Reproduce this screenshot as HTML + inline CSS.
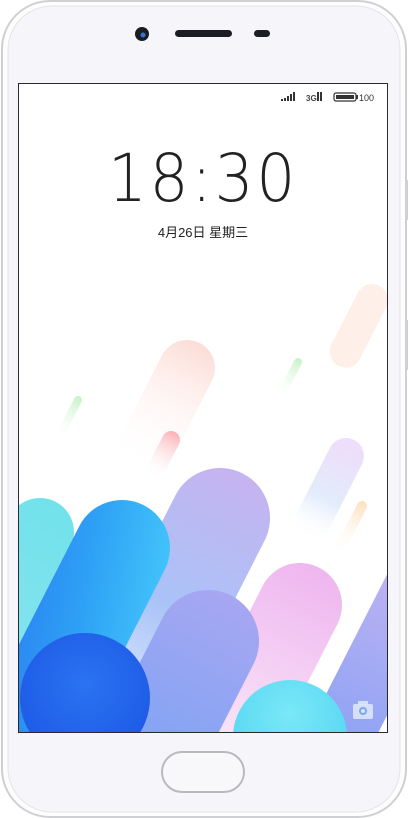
<!DOCTYPE html>
<html><head><meta charset="utf-8"><style>
html,body{margin:0;padding:0;background:#fff;width:408px;height:818px;overflow:hidden}
</style></head><body>
<svg width="408" height="818" viewBox="0 0 408 818" xmlns="http://www.w3.org/2000/svg">
<defs>
<clipPath id="scr"><rect x="19" y="84" width="368" height="648"/></clipPath>
<linearGradient id="gb" x1="1" y1="0" x2="0" y2="1"><stop offset="0" stop-color="#45c8fb"/><stop offset="0.5" stop-color="#2ea0f5"/><stop offset="1" stop-color="#2a7cf0"/></linearGradient>
<linearGradient id="gp" x1="0" y1="0" x2="0" y2="1"><stop offset="0" stop-color="#c6b3f0"/><stop offset="0.5" stop-color="#a9c3f7"/><stop offset="1" stop-color="#eaf2ff"/></linearGradient>
<linearGradient id="gk" x1="0" y1="0" x2="0" y2="1"><stop offset="0" stop-color="#efb6ef"/><stop offset="1" stop-color="#fbf3fb"/></linearGradient>
<linearGradient id="gl" x1="0" y1="0" x2="0" y2="1"><stop offset="0" stop-color="#c4b4f3"/><stop offset="1" stop-color="#7d9ef4"/></linearGradient>
<linearGradient id="gm" x1="0" y1="0" x2="0" y2="1"><stop offset="0" stop-color="#a7a6f2"/><stop offset="1" stop-color="#78a4f4"/></linearGradient>
<linearGradient id="gf" x1="0" y1="0" x2="0" y2="1"><stop offset="0" stop-color="#fcdcd6"/><stop offset="1" stop-color="#ffffff" stop-opacity="0"/></linearGradient>
<linearGradient id="gr" x1="0" y1="0" x2="0" y2="1"><stop offset="0" stop-color="#fbb0b6"/><stop offset="1" stop-color="#ffffff" stop-opacity="0"/></linearGradient>
<linearGradient id="gg" x1="0" y1="0" x2="0" y2="1"><stop offset="0" stop-color="#c6f2c6"/><stop offset="1" stop-color="#ffffff" stop-opacity="0"/></linearGradient>
<linearGradient id="go" x1="0" y1="0" x2="0" y2="1"><stop offset="0" stop-color="#fbe0bc"/><stop offset="1" stop-color="#ffffff" stop-opacity="0"/></linearGradient>
<linearGradient id="gv" x1="0" y1="0" x2="0" y2="1"><stop offset="0" stop-color="#efdcfb"/><stop offset="0.6" stop-color="#e2ecfb"/><stop offset="1" stop-color="#ffffff" stop-opacity="0"/></linearGradient>
<linearGradient id="gcl" x1="0" y1="0" x2="0" y2="1"><stop offset="0" stop-color="#72e2ea"/><stop offset="1" stop-color="#8ee4f0"/></linearGradient>
<radialGradient id="gd" cx="0.5" cy="0.4" r="0.6"><stop offset="0" stop-color="#2a73f2"/><stop offset="1" stop-color="#1e5ae6"/></radialGradient>
<radialGradient id="gcy" cx="0.5" cy="0.3" r="0.7"><stop offset="0" stop-color="#7ae8f7"/><stop offset="1" stop-color="#52d4f2"/></radialGradient>
</defs>
<rect x="2" y="1" width="404" height="816" rx="48" fill="#fdfdfe" stroke="#cfd0d4" stroke-width="2"/>
<rect x="8" y="6" width="392" height="806" rx="44" fill="#f6f6fa" stroke="#e4e4e8" stroke-width="1"/>
<rect x="405" y="180" width="3" height="40" fill="#d0d0d4"/>
<rect x="405" y="320" width="3" height="50" fill="#d0d0d4"/>
<circle cx="142" cy="34" r="7" fill="#1b1b22"/><circle cx="143" cy="35" r="2.5" fill="#3a6fd8"/>
<rect x="175" y="30" width="57" height="7" rx="3.5" fill="#1d1d24"/>
<rect x="254" y="30" width="16" height="7" rx="3.5" fill="#1d1d24"/>
<rect x="18" y="83" width="370" height="650" fill="#2a2a2e"/>
<g clip-path="url(#scr)">
<rect x="19" y="84" width="368" height="648" fill="#fff"/>
<g transform="translate(187,368) rotate(27)"><rect x="-28" y="-28" width="56" height="140" rx="28" fill="url(#gf)"/></g>
<g transform="translate(372,300) rotate(27)"><rect x="-16" y="-16" width="32" height="90" rx="16" fill="#fde6d8" opacity="0.6"/></g>
<g transform="translate(298,362) rotate(27)"><rect x="-4" y="-4" width="8" height="45" rx="4" fill="url(#gg)"/></g>
<g transform="translate(78,400) rotate(27)"><rect x="-4" y="-4" width="8" height="50" rx="4" fill="url(#gg)"/></g>
<g transform="translate(171,440) rotate(27)"><rect x="-9" y="-9" width="18" height="50" rx="9" fill="url(#gr)"/></g>
<g transform="translate(362,506) rotate(27)"><rect x="-5" y="-5" width="10" height="60" rx="5" fill="url(#go)"/></g>
<g transform="translate(346,456) rotate(27)"><rect x="-18" y="-18" width="36" height="110" rx="18" fill="url(#gv)"/></g>
<g transform="translate(40,532) rotate(27)"><rect x="-34" y="-34" width="68" height="260" rx="34" fill="url(#gcl)"/></g>
<g transform="translate(220,518) rotate(27)"><rect x="-50" y="-50" width="100" height="300" rx="50" fill="url(#gp)"/></g>
<g transform="translate(122,548) rotate(27)"><rect x="-48" y="-48" width="96" height="300" rx="48" fill="url(#gb)"/></g>
<g transform="translate(415,590) rotate(27)"><rect x="-32" y="-32" width="64" height="260" rx="32" fill="url(#gl)"/></g>
<g transform="translate(300,605) rotate(27)"><rect x="-42" y="-42" width="84" height="260" rx="42" fill="url(#gk)"/></g>
<g transform="translate(208,641) rotate(27)"><rect x="-51" y="-51" width="102" height="220" rx="51" fill="url(#gm)"/></g>
<circle cx="85" cy="698" r="65" fill="url(#gd)"/>
<circle cx="290" cy="737" r="57" fill="url(#gcy)"/>
<rect x="353" y="704" width="20" height="15" rx="2" fill="#dbe6fb" opacity="0.9"/>
<rect x="358" y="701" width="10" height="4" rx="1" fill="#dbe6fb" opacity="0.9"/>
<circle cx="363" cy="711" r="4" fill="#7ba6f3"/><circle cx="363" cy="711" r="2" fill="#dbe6fb"/>
</g>
<g fill="#333">
<rect x="281" y="99" width="2" height="2"/><rect x="284" y="98" width="2" height="3"/><rect x="287" y="96" width="2" height="5"/><rect x="290" y="94" width="2" height="7"/><rect x="293" y="92" width="2" height="9"/>
<text x="306" y="101" font-family="Liberation Sans" font-size="8" font-weight="bold" fill="#444">3G</text>
<rect x="317" y="92" width="2" height="9"/><rect x="320" y="92" width="2" height="9"/>
<rect x="334" y="93" width="22" height="8" rx="2" fill="none" stroke="#333" stroke-width="1.2"/><rect x="336" y="95" width="18" height="4"/><rect x="356" y="95" width="2" height="4"/>
</g>
<text x="359" y="101" font-family="Liberation Sans" font-size="9" fill="#333">100</text>
<text x="203" y="201" text-anchor="middle" font-family="DejaVu Sans" font-size="66" font-weight="200" fill="#222" letter-spacing="3" textLength="190" lengthAdjust="spacingAndGlyphs">18:30</text>
<text x="203" y="237" text-anchor="middle" font-family="Liberation Sans, Noto Sans CJK SC, sans-serif" font-size="13" fill="#222">4月26日  星期三</text>
<rect x="162" y="752" width="82" height="40" rx="20" fill="#f8f8fb" stroke="#b9babf" stroke-width="2"/>
</svg>
</body></html>
